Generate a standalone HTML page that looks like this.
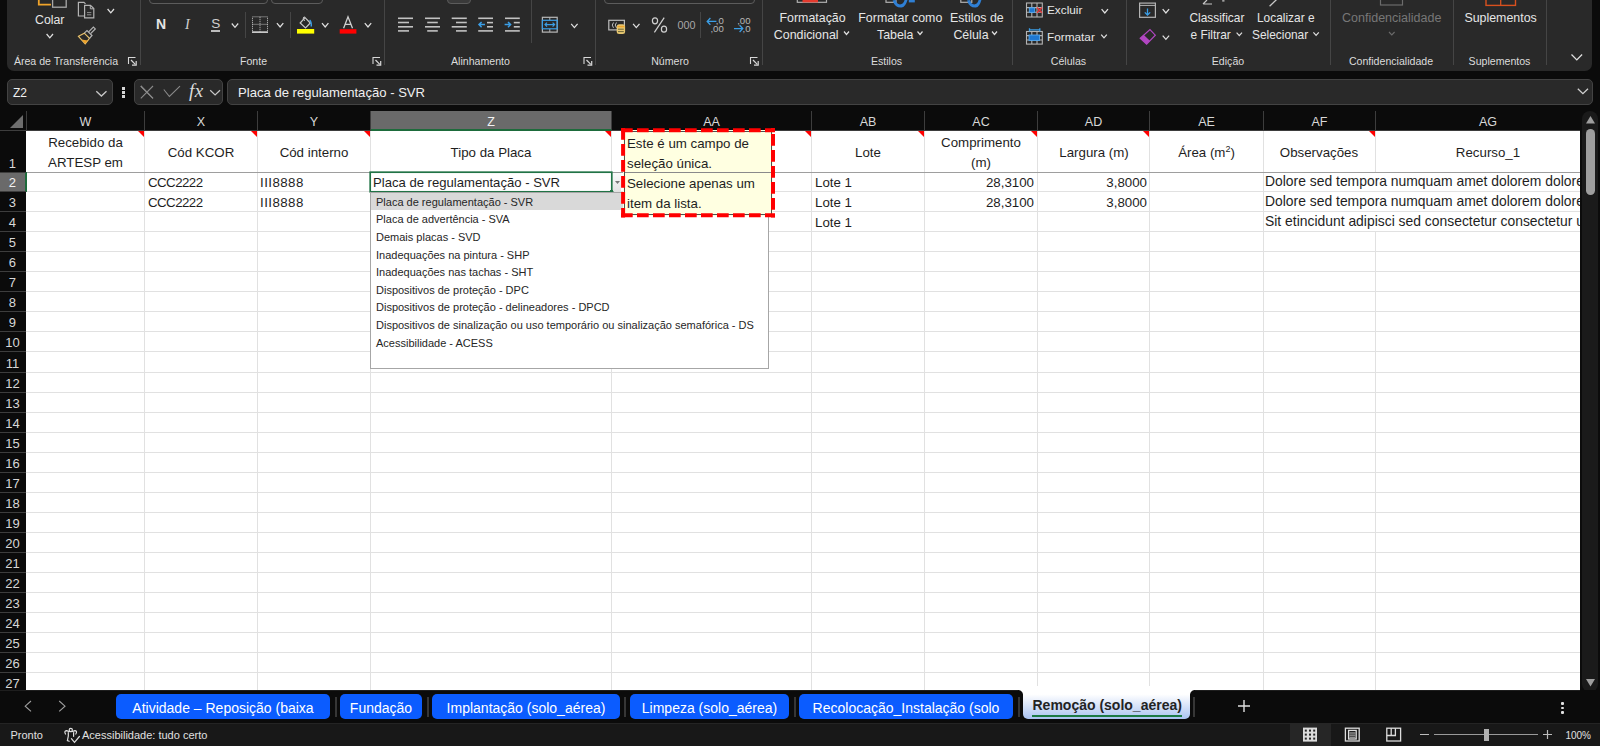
<!DOCTYPE html><html><head><meta charset="utf-8"><style>
html,body{margin:0;padding:0;width:1600px;height:746px;overflow:hidden;background:#0b0b0b;font-family:"Liberation Sans",sans-serif}
.t{position:absolute;white-space:nowrap}
.r{position:absolute}
svg{position:absolute;overflow:visible}
</style></head><body>
<div class="r" style="left:7px;top:-10px;width:1585px;height:81px;background:#292929;border-radius:7px"></div>
<div class="r" style="left:140px;top:0px;width:1px;height:65px;background:#454545"></div>
<div class="r" style="left:384px;top:0px;width:1px;height:65px;background:#454545"></div>
<div class="r" style="left:595px;top:0px;width:1px;height:65px;background:#454545"></div>
<div class="r" style="left:762px;top:0px;width:1px;height:65px;background:#454545"></div>
<div class="r" style="left:1012px;top:0px;width:1px;height:65px;background:#454545"></div>
<div class="r" style="left:1126px;top:0px;width:1px;height:65px;background:#454545"></div>
<div class="r" style="left:1330px;top:0px;width:1px;height:65px;background:#454545"></div>
<div class="r" style="left:1453px;top:0px;width:1px;height:65px;background:#454545"></div>
<div class="r" style="left:1546px;top:0px;width:1px;height:65px;background:#454545"></div>
<div class="r" style="left:245px;top:12px;width:1px;height:26px;background:#454545"></div>
<div class="r" style="left:290px;top:12px;width:1px;height:26px;background:#454545"></div>
<div class="r" style="left:531px;top:0px;width:1px;height:43px;background:#454545"></div>
<div class="r" style="left:700px;top:12px;width:1px;height:26px;background:#454545"></div>
<div class="t" style="left:-234px;width:600px;text-align:center;top:56.03px;font-size:10.6px;line-height:10.6px;color:#dcdcdc;font-weight:normal;">Área de Transferência</div>
<div class="t" style="left:-46.5px;width:600px;text-align:center;top:56.03px;font-size:10.6px;line-height:10.6px;color:#dcdcdc;font-weight:normal;">Fonte</div>
<div class="t" style="left:180.5px;width:600px;text-align:center;top:56.03px;font-size:10.6px;line-height:10.6px;color:#dcdcdc;font-weight:normal;">Alinhamento</div>
<div class="t" style="left:370px;width:600px;text-align:center;top:56.03px;font-size:10.6px;line-height:10.6px;color:#dcdcdc;font-weight:normal;">Número</div>
<div class="t" style="left:586.5px;width:600px;text-align:center;top:56.03px;font-size:10.6px;line-height:10.6px;color:#dcdcdc;font-weight:normal;">Estilos</div>
<div class="t" style="left:768.5px;width:600px;text-align:center;top:56.03px;font-size:10.6px;line-height:10.6px;color:#dcdcdc;font-weight:normal;">Células</div>
<div class="t" style="left:928px;width:600px;text-align:center;top:56.03px;font-size:10.6px;line-height:10.6px;color:#dcdcdc;font-weight:normal;">Edição</div>
<div class="t" style="left:1091px;width:600px;text-align:center;top:56.03px;font-size:10.6px;line-height:10.6px;color:#dcdcdc;font-weight:normal;">Confidencialidade</div>
<div class="t" style="left:1199.5px;width:600px;text-align:center;top:56.03px;font-size:10.6px;line-height:10.6px;color:#dcdcdc;font-weight:normal;">Suplementos</div>
<svg style="left:0;top:0" width="1" height="1"><path d="M38.8,0 V4.6 H51" fill="none" stroke="#f0a32a" stroke-width="1.8"/><rect x="52.6" y="-3" width="13.6" height="10.2" fill="none" stroke="#a8a8a8" stroke-width="1.3"/></svg>
<div class="t" style="left:35px;top:13.59px;font-size:12.3px;line-height:12.3px;color:#e6e6e6;font-weight:normal;">Colar</div>
<svg style="left:0;top:0" width="1" height="1"><polyline points="46.6,34 49.800000000000004,37.8 53.0,34" fill="none" stroke="#e0e0e0" stroke-width="1.25" stroke-linejoin="miter"/></svg>
<svg style="left:0;top:0" width="1" height="1"><path d="M84.5,16 H78.4 V2.3 H84 L85.5,3.8" fill="none" stroke="#b4b4b4" stroke-width="1.2"/><path d="M84.6,5.3 H90.5 L93.8,8.6 V17.8 H84.6 Z" fill="#292929" stroke="#b4b4b4" stroke-width="1.2"/><path d="M90.3,5.3 V8.8 H93.8" fill="none" stroke="#b4b4b4" stroke-width="1"/><path d="M87,12.6 H91.3 M87,14.8 H91.3" stroke="#9a9a9a" stroke-width="0.9"/></svg>
<svg style="left:0;top:0" width="1" height="1"><polyline points="107.6,9 110.8,12.8 114.0,9" fill="none" stroke="#e0e0e0" stroke-width="1.25" stroke-linejoin="miter"/></svg>
<svg style="left:0;top:0" width="1" height="1"><path d="M78.5,36.3 L84.3,33.2 L89.5,38.4 L85.2,43.8 Z" fill="none" stroke="#e8c06a" stroke-width="1.2"/><path d="M81.5,39.5 L87.8,40.5 L85.2,43.8 Z" fill="#f0a32a"/><path d="M84.3,33.2 L87,30.5 L92,35.5 L89.5,38.4" fill="none" stroke="#b4b4b4" stroke-width="1.2"/><path d="M88.6,31.8 L93.4,27 L95.3,28.9 L90.6,33.7" fill="none" stroke="#b4b4b4" stroke-width="1.2"/></svg>
<svg style="left:0;top:0" width="1" height="1"><path d="M128.5,64 V57.5 H135.5" fill="none" stroke="#d8d8d8" stroke-width="1.1"/><path d="M131,60 L135.3,64.3" stroke="#d8d8d8" stroke-width="1.2"/><path d="M136.2,61 V65.2 H132" fill="none" stroke="#d8d8d8" stroke-width="1.2"/></svg>
<div class="r" style="left:149px;top:-10px;width:119px;height:13.5px;border:1px solid #5c5c5c;border-radius:4px;box-sizing:border-box"></div>
<div class="r" style="left:270.5px;top:-10px;width:52.5px;height:13.5px;border:1px solid #5c5c5c;border-radius:4px;box-sizing:border-box"></div>
<div class="t" style="left:156px;top:17.15px;font-size:14px;line-height:14px;color:#e4e4e4;font-weight:bold;">N</div>
<div class="t" style="left:185px;top:17.2px;font-family:'Liberation Serif';font-style:italic;font-size:14.2px;line-height:14px;color:#d0d0d0">I</div>
<div class="t" style="left:211.2px;top:17.49px;font-size:13.6px;line-height:13.6px;color:#d0d0d0;font-weight:normal;">S</div>
<div class="r" style="left:211px;top:30px;width:9px;height:1.6px;background:#bcbcbc"></div>
<svg style="left:0;top:0" width="1" height="1"><polyline points="231.8,23.5 235.0,27.3 238.20000000000002,23.5" fill="none" stroke="#e0e0e0" stroke-width="1.25" stroke-linejoin="miter"/></svg>
<svg style="left:0;top:0" width="1" height="1"><g fill="none" stroke="#c4c4c4" stroke-width="1" stroke-dasharray="1 1"><rect x="252.5" y="16.8" width="15" height="15"/><path d="M260,16.8 V32 M252.5,24.3 H267.5"/></g><path d="M252,32.2 H268" stroke="#c8c8c8" stroke-width="1.6"/></svg>
<svg style="left:0;top:0" width="1" height="1"><polyline points="276.9,23.2 280.09999999999997,27.0 283.29999999999995,23.2" fill="none" stroke="#e0e0e0" stroke-width="1.25" stroke-linejoin="miter"/></svg>
<svg style="left:0;top:0" width="1" height="1"><path d="M300.2,23 L305,17.6 L310.3,23 L305.5,28 Z" fill="none" stroke="#c8c8c8" stroke-width="1.2"/><path d="M305,17.6 L304,16.8 L303.2,18.2 L304.6,21" fill="none" stroke="#c8c8c8" stroke-width="1"/><path d="M309.6,20 Q311.5,21.5 311.3,26.5" fill="none" stroke="#3b9ee6" stroke-width="1.5"/><rect x="297" y="29" width="17.2" height="4.6" fill="#ffff00"/></svg>
<svg style="left:0;top:0" width="1" height="1"><polyline points="322,23.2 325.2,27.0 328.4,23.2" fill="none" stroke="#e0e0e0" stroke-width="1.25" stroke-linejoin="miter"/></svg>
<svg style="left:0;top:0" width="1" height="1"><path d="M343.6,28.3 L348,16.8 L352.5,28.3 M345.2,24.3 H350.8" fill="none" stroke="#cfcfcf" stroke-width="1.3"/><rect x="339.7" y="29.2" width="16.7" height="4.4" fill="#ff0000"/></svg>
<svg style="left:0;top:0" width="1" height="1"><polyline points="364.8,23.2 368.0,27.0 371.2,23.2" fill="none" stroke="#e0e0e0" stroke-width="1.25" stroke-linejoin="miter"/></svg>
<svg style="left:0;top:0" width="1" height="1"><path d="M373.0,64 V57.5 H380.0" fill="none" stroke="#d8d8d8" stroke-width="1.1"/><path d="M375.5,60 L379.8,64.3" stroke="#d8d8d8" stroke-width="1.2"/><path d="M380.7,61 V65.2 H376.5" fill="none" stroke="#d8d8d8" stroke-width="1.2"/></svg>
<div class="r" style="left:446.7px;top:-10px;width:24.8px;height:13.8px;background:#3a3a3a;border:1px solid #5c5c5c;border-radius:4px;box-sizing:border-box"></div>
<svg style="left:0;top:0" width="1" height="1"><g stroke="#c2c2c2" stroke-width="1.6"><path d="M398,18.3 H413"/><path d="M398,22.5 H409"/><path d="M398,26.8 H413"/><path d="M398,30.9 H409"/></g></svg>
<svg style="left:0;top:0" width="1" height="1"><g stroke="#c2c2c2" stroke-width="1.6"><path d="M425,18.3 H440"/><path d="M427.2,22.5 H437.8"/><path d="M425,26.8 H440"/><path d="M427.2,30.9 H437.8"/></g></svg>
<svg style="left:0;top:0" width="1" height="1"><g stroke="#c2c2c2" stroke-width="1.6"><path d="M451.7,18.3 H466.8"/><path d="M456,22.5 H466.8"/><path d="M451.7,26.8 H466.8"/><path d="M456,30.9 H466.8"/></g></svg>
<svg style="left:0;top:0" width="1" height="1"><g stroke="#c2c2c2" stroke-width="1.6"><path d="M478.2,18.3 H493"/><path d="M487,22.6 H493"/><path d="M487,26.8 H493"/><path d="M478.2,30.9 H493"/></g></svg>
<svg style="left:0;top:0" width="1" height="1"><g stroke="#c2c2c2" stroke-width="1.6"><path d="M505,18.3 H519.8"/><path d="M513.8,22.6 H519.8"/><path d="M513.8,26.8 H519.8"/><path d="M505,30.9 H519.8"/></g></svg>
<svg style="left:0;top:0" width="1" height="1"><g fill="none" stroke="#3b9ee6" stroke-width="1.5"><path d="M479,24.6 H485 M481.6,22 L479,24.6 L481.6,27.2"/><path d="M504.6,24.6 H510.6 M508,22 L510.6,24.6 L508,27.2"/></g></svg>
<svg style="left:0;top:0" width="1" height="1"><rect x="542.4" y="17.3" width="14.8" height="14.8" fill="none" stroke="#b8b8b8" stroke-width="1.2"/><path d="M549.8,17.3 V20.3 M549.8,28.8 V32" stroke="#b8b8b8" stroke-width="1"/><rect x="542.4" y="20.3" width="14.8" height="8.5" fill="none" stroke="#3b9ee6" stroke-width="1.2"/><g fill="none" stroke="#3b9ee6" stroke-width="1.2"><path d="M545,24.6 H554.6 M547,22.6 L545,24.6 L547,26.6 M552.6,22.6 L554.6,24.6 L552.6,26.6"/></g></svg>
<svg style="left:0;top:0" width="1" height="1"><polyline points="571.2,23.8 574.4000000000001,27.6 577.6,23.8" fill="none" stroke="#e0e0e0" stroke-width="1.25" stroke-linejoin="miter"/></svg>
<svg style="left:0;top:0" width="1" height="1"><path d="M584.0,64 V57.5 H591.0" fill="none" stroke="#d8d8d8" stroke-width="1.1"/><path d="M586.5,60 L590.8,64.3" stroke="#d8d8d8" stroke-width="1.2"/><path d="M591.7,61 V65.2 H587.5" fill="none" stroke="#d8d8d8" stroke-width="1.2"/></svg>
<div class="r" style="left:604px;top:-10px;width:151px;height:13.9px;border:1px solid #5c5c5c;border-radius:4px;box-sizing:border-box"></div>
<svg style="left:0;top:0" width="1" height="1"><rect x="608.8" y="20.3" width="15.6" height="9.6" fill="none" stroke="#bdbdbd" stroke-width="1.2"/><path d="M613.5,22.5 Q611,25 613.5,27.8 M616.5,22.5 Q614,25 616.5,27.8" fill="none" stroke="#bdbdbd" stroke-width="1"/><rect x="616.7" y="24.2" width="8.4" height="9.7" rx="2.5" fill="#e6c670"/><path d="M617.5,26.6 H624.3" stroke="#f0a32a" stroke-width="1.4"/><path d="M618,29.2 H623.8 M618,31.6 H623.8" stroke="#4a4a2a" stroke-width="0.8"/></svg>
<svg style="left:0;top:0" width="1" height="1"><polyline points="633.1,23.8 636.3000000000001,27.6 639.5,23.8" fill="none" stroke="#e0e0e0" stroke-width="1.25" stroke-linejoin="miter"/></svg>
<svg style="left:0;top:0" width="1" height="1"><g fill="none" stroke="#d0d0d0" stroke-width="1.2"><ellipse cx="655" cy="20.8" rx="2.6" ry="3"/><ellipse cx="664" cy="29.2" rx="2.6" ry="3"/><path d="M664.2,17.6 L654.4,32.3"/></g></svg>
<div class="t" style="left:677.4px;top:19.76px;font-size:10.8px;line-height:10.8px;color:#a8a8a8;font-weight:normal;">000</div>
<svg style="left:0;top:0" width="1" height="1"><g fill="none" stroke="#3b9ee6" stroke-width="1.3"><path d="M707.2,21.4 H716.4 M710.4,18 L707.2,21.4 L710.4,24.8"/><path d="M734,28.6 H742.8 M739.6,25.2 L742.8,28.6 L739.6,32"/></g></svg>
<div class="t" style="left:715.8px;top:15.67px;font-size:9.6px;line-height:9.6px;color:#b8b8b8;font-weight:normal;">,0</div>
<div class="t" style="left:710.4px;top:24.47px;font-size:9.6px;line-height:9.6px;color:#b8b8b8;font-weight:normal;">,00</div>
<div class="t" style="left:737.2px;top:15.67px;font-size:9.6px;line-height:9.6px;color:#b8b8b8;font-weight:normal;">,00</div>
<div class="t" style="left:742.6px;top:24.47px;font-size:9.6px;line-height:9.6px;color:#b8b8b8;font-weight:normal;">,0</div>
<svg style="left:0;top:0" width="1" height="1"><path d="M750.5,64 V57.5 H757.5" fill="none" stroke="#d8d8d8" stroke-width="1.1"/><path d="M753,60 L757.3,64.3" stroke="#d8d8d8" stroke-width="1.2"/><path d="M758.2,61 V65.2 H754" fill="none" stroke="#d8d8d8" stroke-width="1.2"/></svg>
<svg style="left:0;top:0" width="1" height="1"><rect x="797.3" y="-6" width="29.2" height="8.3" fill="none" stroke="#b0b0b0" stroke-width="1.2"/><rect x="802.5" y="-5" width="15.5" height="7.4" fill="#e43a2e"/><rect x="886" y="-6" width="10" height="8.3" fill="none" stroke="#b0b0b0" stroke-width="1.2"/><path d="M892.6,0.5 Q895,8 901.5,7.6 Q905.5,7 907.5,0 L904.6,0 Q903.5,4.2 900,4.4 Q896.6,4.2 895.8,0 Z" fill="#2f7fd4"/><rect x="908.8" y="-5" width="6" height="7.4" fill="#2f7fd4"/><rect x="960.8" y="-6" width="11" height="8.3" fill="none" stroke="#b0b0b0" stroke-width="1.2"/><path d="M967,0.5 Q969.4,8 975.8,7.6 Q979.6,7 981.4,0 L978.6,0 Q977.6,4.2 974.2,4.4 Q970.8,4.2 970.2,0 Z" fill="#2f7fd4"/></svg>
<div class="t" style="left:779.5px;top:12.30px;font-size:12.4px;line-height:12.4px;color:#e6e6e6;font-weight:normal;">Formatação</div>
<div class="t" style="left:773.8px;top:28.50px;font-size:12.4px;line-height:12.4px;color:#e6e6e6;font-weight:normal;">Condicional</div>
<svg style="left:0;top:0" width="1" height="1"><polyline points="844,31.5 846.5,34.5 849,31.5" fill="none" stroke="#e0e0e0" stroke-width="1.2" stroke-linejoin="miter"/></svg>
<div class="t" style="left:858.3px;top:12.30px;font-size:12.4px;line-height:12.4px;color:#e6e6e6;font-weight:normal;">Formatar como</div>
<div class="t" style="left:877px;top:28.50px;font-size:12.4px;line-height:12.4px;color:#e6e6e6;font-weight:normal;">Tabela</div>
<svg style="left:0;top:0" width="1" height="1"><polyline points="917.5,31.5 920.0,34.5 922.5,31.5" fill="none" stroke="#e0e0e0" stroke-width="1.2" stroke-linejoin="miter"/></svg>
<div class="t" style="left:950px;top:12.30px;font-size:12.4px;line-height:12.4px;color:#e6e6e6;font-weight:normal;">Estilos de</div>
<div class="t" style="left:953.4px;top:28.50px;font-size:12.4px;line-height:12.4px;color:#e6e6e6;font-weight:normal;">Célula</div>
<svg style="left:0;top:0" width="1" height="1"><polyline points="992,31.5 994.5,34.5 997,31.5" fill="none" stroke="#e0e0e0" stroke-width="1.2" stroke-linejoin="miter"/></svg>
<svg style="left:0;top:0" width="1" height="1"><g fill="none" stroke="#b4b4b4" stroke-width="1.1"><rect x="1026.5" y="3" width="15.8" height="14"/><path d="M1026.5,7.6 H1042.3 M1026.5,12.3 H1042.3 M1031.8,3 V17 M1037,3 V17"/></g><rect x="1029.3" y="7.8" width="5.4" height="4.6" fill="#1f78d1" stroke="#55a8ee" stroke-width="0.9"/><path d="M1037,7.5 L1042,12.8 M1042,7.5 L1037,12.8" stroke="#e8353a" stroke-width="1.3"/></svg>
<div class="t" style="left:1047px;top:5.21px;font-size:11.8px;line-height:11.8px;color:#e6e6e6;font-weight:normal;">Excluir</div>
<svg style="left:0;top:0" width="1" height="1"><polyline points="1101.6,9.2 1104.8,13.0 1108.0,9.2" fill="none" stroke="#e0e0e0" stroke-width="1.25" stroke-linejoin="miter"/></svg>
<svg style="left:0;top:0" width="1" height="1"><g fill="none" stroke="#b4b4b4" stroke-width="1.1"><rect x="1026.5" y="31.5" width="15.8" height="12.6"/><path d="M1026.5,35.6 H1042.3 M1026.5,40 H1042.3 M1031.8,31.5 V44 M1037,31.5 V44"/></g><rect x="1029" y="35" width="10.6" height="5.4" fill="#1f78d1" stroke="#55a8ee" stroke-width="0.9"/><path d="M1029.5,29.8 H1039.8 M1029.5,28.2 V31.4 M1039.8,28.2 V31.4" stroke="#3b9ee6" stroke-width="1.3"/></svg>
<div class="t" style="left:1047px;top:31.61px;font-size:11.8px;line-height:11.8px;color:#e6e6e6;font-weight:normal;">Formatar</div>
<svg style="left:0;top:0" width="1" height="1"><polyline points="1101.2,34.6 1104.0,37.9 1106.8,34.6" fill="none" stroke="#e0e0e0" stroke-width="1.25" stroke-linejoin="miter"/></svg>
<svg style="left:0;top:0" width="1" height="1"><rect x="1139.6" y="3.1" width="15.8" height="14.2" fill="none" stroke="#b4b4b4" stroke-width="1.2"/><path d="M1139.6,5.4 H1155.4" stroke="#b4b4b4" stroke-width="1"/><path d="M1147.5,8.5 V15 M1144.8,12.4 L1147.5,15 L1150.2,12.4" fill="none" stroke="#3b9ee6" stroke-width="1.3"/><path d="M1150,29.6 L1155.3,35.2 L1146.6,44.2 L1140.2,38.2 Z" fill="none" stroke="#b146c2" stroke-width="1.2"/><path d="M1143.6,34.7 L1149.9,40.8 L1146.6,44.2 L1140.2,38.2 Z" fill="#b146c2"/><path d="M1203,4 H1212 M1203,4 L1207,0 M1222.2,0.8 H1224.5" fill="none" stroke="#c8c8c8" stroke-width="1.2"/><path d="M1269.6,6.3 L1276.6,-0.5" stroke="#c8c8c8" stroke-width="1.3"/></svg>
<svg style="left:0;top:0" width="1" height="1"><polyline points="1162.7,9.2 1165.9,13.0 1169.1000000000001,9.2" fill="none" stroke="#e0e0e0" stroke-width="1.25" stroke-linejoin="miter"/></svg>
<svg style="left:0;top:0" width="1" height="1"><polyline points="1162.7,35.6 1165.9,39.4 1169.1000000000001,35.6" fill="none" stroke="#e0e0e0" stroke-width="1.25" stroke-linejoin="miter"/></svg>
<div class="t" style="left:1189.5px;top:13.13px;font-size:11.9px;line-height:11.9px;color:#e6e6e6;font-weight:normal;">Classificar</div>
<div class="t" style="left:1190.5px;top:29.83px;font-size:11.9px;line-height:11.9px;color:#e6e6e6;font-weight:normal;">e Filtrar</div>
<svg style="left:0;top:0" width="1" height="1"><polyline points="1236.6,32.6 1239.3,35.6 1242.0,32.6" fill="none" stroke="#e0e0e0" stroke-width="1.2" stroke-linejoin="miter"/></svg>
<div class="t" style="left:1257px;top:13.13px;font-size:11.9px;line-height:11.9px;color:#e6e6e6;font-weight:normal;">Localizar e</div>
<div class="t" style="left:1252px;top:29.83px;font-size:11.9px;line-height:11.9px;color:#e6e6e6;font-weight:normal;">Selecionar</div>
<svg style="left:0;top:0" width="1" height="1"><polyline points="1313.4,32.4 1316.1000000000001,35.4 1318.8000000000002,32.4" fill="none" stroke="#e0e0e0" stroke-width="1.2" stroke-linejoin="miter"/></svg>
<svg style="left:0;top:0" width="1" height="1"><rect x="1380.5" y="-8" width="22" height="13" fill="none" stroke="#6c6c6c" stroke-width="1.2"/><rect x="1486" y="-8" width="29.5" height="13.4" fill="none" stroke="#d8501e" stroke-width="1.4"/><path d="M1500.7,-8 V5" stroke="#d8501e" stroke-width="1.3"/></svg>
<div class="t" style="left:1342px;top:12.42px;font-size:12.5px;line-height:12.5px;color:#777777;font-weight:normal;">Confidencialidade</div>
<svg style="left:0;top:0" width="1" height="1"><polyline points="1389,32 1391.8,35 1394.6,32" fill="none" stroke="#6a6a6a" stroke-width="1.1" stroke-linejoin="miter"/></svg>
<div class="t" style="left:1464.4px;top:12.30px;font-size:12.4px;line-height:12.4px;color:#e6e6e6;font-weight:normal;">Suplementos</div>
<svg style="left:0;top:0" width="1" height="1"><polyline points="1571.5,54.5 1576.8,59.9 1582.1,54.5" fill="none" stroke="#e0e0e0" stroke-width="1.3" stroke-linejoin="miter"/></svg>
<div class="r" style="left:7px;top:79px;width:104px;height:24px;background:#292929;border:1px solid #434343;border-radius:5px"></div>
<div class="r" style="left:134px;top:79px;width:87px;height:24px;background:#292929;border:1px solid #434343;border-radius:5px"></div>
<div class="t" style="left:13px;top:86.84px;font-size:12px;line-height:12px;color:#f0f0f0;font-weight:normal;">Z2</div>
<svg style="left:0;top:0" width="1" height="1"><polyline points="96.3,91.2 101.4,96 106.5,91.2" fill="none" stroke="#c8c8c8" stroke-width="1.3"/><polyline points="140.8,86 153,98.3 M140.8,98.3 153,86" fill="none" stroke="#8a8a8a" stroke-width="1.1"/><path d="M140.8,86 L153,98.3 M140.8,98.3 L153,86" stroke="#8a8a8a" stroke-width="1.1"/><polyline points="163.8,89.5 169.4,96.5 180,86.2" fill="none" stroke="#8a8a8a" stroke-width="1.1"/><polyline points="210.2,90.2 215.1,95 220,90.2" fill="none" stroke="#c8c8c8" stroke-width="1.2"/></svg>
<div class="r" style="left:122px;top:87px;width:3px;height:3px;background:#d6d6d6"></div>
<div class="r" style="left:122px;top:91px;width:3px;height:3px;background:#d6d6d6"></div>
<div class="r" style="left:122px;top:95px;width:3px;height:3px;background:#d6d6d6"></div>
<div class="t" style="left:189px;top:80.5px;font-family:Liberation Serif;font-style:italic;font-size:19px;line-height:19px;letter-spacing:0.5px;color:#dcdcdc">fx</div>
<div class="r" style="left:227px;top:79px;width:1364px;height:24px;background:#292929;border:1px solid #434343;border-radius:5px"></div>
<div class="t" style="left:238px;top:85.91px;font-size:13.1px;line-height:13.1px;color:#f0f0f0;font-weight:normal;">Placa de regulamentação - SVR</div>
<svg style="left:0;top:0" width="1" height="1"><polyline points="1577.8,88.8 1582.9,93.6 1588,88.8" fill="none" stroke="#d0d0d0" stroke-width="1.3"/></svg>
<div class="r" style="left:0px;top:111px;width:1580px;height:20px;background:#0b0b0b"></div>
<div class="r" style="left:26px;top:131px;width:1554px;height:559px;background:#ffffff"></div>
<div class="r" style="left:144px;top:131px;width:1px;height:559px;background:#e1e1e1"></div>
<div class="r" style="left:257px;top:131px;width:1px;height:559px;background:#e1e1e1"></div>
<div class="r" style="left:370px;top:131px;width:1px;height:559px;background:#e1e1e1"></div>
<div class="r" style="left:611px;top:131px;width:1px;height:559px;background:#e1e1e1"></div>
<div class="r" style="left:811px;top:131px;width:1px;height:559px;background:#e1e1e1"></div>
<div class="r" style="left:924px;top:131px;width:1px;height:559px;background:#e1e1e1"></div>
<div class="r" style="left:1037px;top:131px;width:1px;height:559px;background:#e1e1e1"></div>
<div class="r" style="left:1149px;top:131px;width:1px;height:559px;background:#e1e1e1"></div>
<div class="r" style="left:1263px;top:131px;width:1px;height:559px;background:#e1e1e1"></div>
<div class="r" style="left:1375px;top:131px;width:1px;height:559px;background:#e1e1e1"></div>
<div class="r" style="left:26px;top:172px;width:1554px;height:1px;background:#9e9e9e"></div>
<div class="r" style="left:26px;top:191px;width:1554px;height:1px;background:#e1e1e1"></div>
<div class="r" style="left:26px;top:211px;width:1554px;height:1px;background:#e1e1e1"></div>
<div class="r" style="left:26px;top:231px;width:1554px;height:1px;background:#e1e1e1"></div>
<div class="r" style="left:26px;top:251px;width:1554px;height:1px;background:#e1e1e1"></div>
<div class="r" style="left:26px;top:271px;width:1554px;height:1px;background:#e1e1e1"></div>
<div class="r" style="left:26px;top:291px;width:1554px;height:1px;background:#e1e1e1"></div>
<div class="r" style="left:26px;top:311px;width:1554px;height:1px;background:#e1e1e1"></div>
<div class="r" style="left:26px;top:331px;width:1554px;height:1px;background:#e1e1e1"></div>
<div class="r" style="left:26px;top:351px;width:1554px;height:1px;background:#e1e1e1"></div>
<div class="r" style="left:26px;top:372px;width:1554px;height:1px;background:#e1e1e1"></div>
<div class="r" style="left:26px;top:392px;width:1554px;height:1px;background:#e1e1e1"></div>
<div class="r" style="left:26px;top:412px;width:1554px;height:1px;background:#e1e1e1"></div>
<div class="r" style="left:26px;top:432px;width:1554px;height:1px;background:#e1e1e1"></div>
<div class="r" style="left:26px;top:452px;width:1554px;height:1px;background:#e1e1e1"></div>
<div class="r" style="left:26px;top:472px;width:1554px;height:1px;background:#e1e1e1"></div>
<div class="r" style="left:26px;top:492px;width:1554px;height:1px;background:#e1e1e1"></div>
<div class="r" style="left:26px;top:512px;width:1554px;height:1px;background:#e1e1e1"></div>
<div class="r" style="left:26px;top:532px;width:1554px;height:1px;background:#e1e1e1"></div>
<div class="r" style="left:26px;top:552px;width:1554px;height:1px;background:#e1e1e1"></div>
<div class="r" style="left:26px;top:572px;width:1554px;height:1px;background:#e1e1e1"></div>
<div class="r" style="left:26px;top:592px;width:1554px;height:1px;background:#e1e1e1"></div>
<div class="r" style="left:26px;top:612px;width:1554px;height:1px;background:#e1e1e1"></div>
<div class="r" style="left:26px;top:632px;width:1554px;height:1px;background:#e1e1e1"></div>
<div class="r" style="left:26px;top:652px;width:1554px;height:1px;background:#e1e1e1"></div>
<div class="r" style="left:26px;top:672px;width:1554px;height:1px;background:#e1e1e1"></div>
<div class="r" style="left:0px;top:131px;width:26px;height:559px;background:#0b0b0b"></div>
<div class="r" style="left:371px;top:111px;width:240px;height:19px;background:#6a6a6a"></div>
<div class="r" style="left:371px;top:129px;width:240px;height:2px;background:#1d6b3b"></div>
<div class="r" style="left:26px;top:111px;width:1px;height:19px;background:#3d3d3d"></div>
<div class="r" style="left:144px;top:111px;width:1px;height:19px;background:#3d3d3d"></div>
<div class="r" style="left:257px;top:111px;width:1px;height:19px;background:#3d3d3d"></div>
<div class="r" style="left:370px;top:111px;width:1px;height:19px;background:#3d3d3d"></div>
<div class="r" style="left:611px;top:111px;width:1px;height:19px;background:#3d3d3d"></div>
<div class="r" style="left:811px;top:111px;width:1px;height:19px;background:#3d3d3d"></div>
<div class="r" style="left:924px;top:111px;width:1px;height:19px;background:#3d3d3d"></div>
<div class="r" style="left:1037px;top:111px;width:1px;height:19px;background:#3d3d3d"></div>
<div class="r" style="left:1149px;top:111px;width:1px;height:19px;background:#3d3d3d"></div>
<div class="r" style="left:1263px;top:111px;width:1px;height:19px;background:#3d3d3d"></div>
<div class="r" style="left:1375px;top:111px;width:1px;height:19px;background:#3d3d3d"></div>
<div class="r" style="left:0px;top:130px;width:371px;height:1px;background:#3d3d3d"></div>
<div class="r" style="left:611px;top:130px;width:969px;height:1px;background:#3d3d3d"></div>
<svg style="left:0;top:111px" width="26" height="19"><polygon points="23,4 23,17 10,17" fill="#6e6e6e"/></svg>
<div class="t" style="left:-214.5px;width:600px;text-align:center;top:116.22px;font-size:12.5px;line-height:12.5px;color:#d8d8d8;font-weight:normal;">W</div>
<div class="t" style="left:-99.0px;width:600px;text-align:center;top:116.22px;font-size:12.5px;line-height:12.5px;color:#d8d8d8;font-weight:normal;">X</div>
<div class="t" style="left:14.0px;width:600px;text-align:center;top:116.22px;font-size:12.5px;line-height:12.5px;color:#d8d8d8;font-weight:normal;">Y</div>
<div class="t" style="left:191.0px;width:600px;text-align:center;top:116.22px;font-size:12.5px;line-height:12.5px;color:#f2f2f2;font-weight:normal;">Z</div>
<div class="t" style="left:411.5px;width:600px;text-align:center;top:116.22px;font-size:12.5px;line-height:12.5px;color:#d8d8d8;font-weight:normal;">AA</div>
<div class="t" style="left:568.0px;width:600px;text-align:center;top:116.22px;font-size:12.5px;line-height:12.5px;color:#d8d8d8;font-weight:normal;">AB</div>
<div class="t" style="left:681.0px;width:600px;text-align:center;top:116.22px;font-size:12.5px;line-height:12.5px;color:#d8d8d8;font-weight:normal;">AC</div>
<div class="t" style="left:793.5px;width:600px;text-align:center;top:116.22px;font-size:12.5px;line-height:12.5px;color:#d8d8d8;font-weight:normal;">AD</div>
<div class="t" style="left:906.5px;width:600px;text-align:center;top:116.22px;font-size:12.5px;line-height:12.5px;color:#d8d8d8;font-weight:normal;">AE</div>
<div class="t" style="left:1019.5px;width:600px;text-align:center;top:116.22px;font-size:12.5px;line-height:12.5px;color:#d8d8d8;font-weight:normal;">AF</div>
<div class="t" style="left:1188.0px;width:600px;text-align:center;top:116.22px;font-size:12.5px;line-height:12.5px;color:#d8d8d8;font-weight:normal;">AG</div>
<div class="r" style="left:0px;top:173px;width:26px;height:18px;background:#6a6a6a"></div>
<div class="r" style="left:25px;top:172px;width:2px;height:20px;background:#1d6b3b"></div>
<div class="r" style="left:0px;top:172px;width:26px;height:1px;background:#3d3d3d"></div>
<div class="r" style="left:0px;top:191px;width:26px;height:1px;background:#3d3d3d"></div>
<div class="r" style="left:0px;top:211px;width:26px;height:1px;background:#3d3d3d"></div>
<div class="r" style="left:0px;top:231px;width:26px;height:1px;background:#3d3d3d"></div>
<div class="r" style="left:0px;top:251px;width:26px;height:1px;background:#3d3d3d"></div>
<div class="r" style="left:0px;top:271px;width:26px;height:1px;background:#3d3d3d"></div>
<div class="r" style="left:0px;top:291px;width:26px;height:1px;background:#3d3d3d"></div>
<div class="r" style="left:0px;top:311px;width:26px;height:1px;background:#3d3d3d"></div>
<div class="r" style="left:0px;top:331px;width:26px;height:1px;background:#3d3d3d"></div>
<div class="r" style="left:0px;top:351px;width:26px;height:1px;background:#3d3d3d"></div>
<div class="r" style="left:0px;top:372px;width:26px;height:1px;background:#3d3d3d"></div>
<div class="r" style="left:0px;top:392px;width:26px;height:1px;background:#3d3d3d"></div>
<div class="r" style="left:0px;top:412px;width:26px;height:1px;background:#3d3d3d"></div>
<div class="r" style="left:0px;top:432px;width:26px;height:1px;background:#3d3d3d"></div>
<div class="r" style="left:0px;top:452px;width:26px;height:1px;background:#3d3d3d"></div>
<div class="r" style="left:0px;top:472px;width:26px;height:1px;background:#3d3d3d"></div>
<div class="r" style="left:0px;top:492px;width:26px;height:1px;background:#3d3d3d"></div>
<div class="r" style="left:0px;top:512px;width:26px;height:1px;background:#3d3d3d"></div>
<div class="r" style="left:0px;top:532px;width:26px;height:1px;background:#3d3d3d"></div>
<div class="r" style="left:0px;top:552px;width:26px;height:1px;background:#3d3d3d"></div>
<div class="r" style="left:0px;top:572px;width:26px;height:1px;background:#3d3d3d"></div>
<div class="r" style="left:0px;top:592px;width:26px;height:1px;background:#3d3d3d"></div>
<div class="r" style="left:0px;top:612px;width:26px;height:1px;background:#3d3d3d"></div>
<div class="r" style="left:0px;top:632px;width:26px;height:1px;background:#3d3d3d"></div>
<div class="r" style="left:0px;top:652px;width:26px;height:1px;background:#3d3d3d"></div>
<div class="r" style="left:0px;top:672px;width:26px;height:1px;background:#3d3d3d"></div>
<div class="t" style="left:-287.7px;width:600px;text-align:center;top:156.60px;font-size:13px;line-height:13px;color:#d8d8d8;font-weight:normal;">1</div>
<div class="t" style="left:-287.6px;width:600px;text-align:center;top:176.40px;font-size:13px;line-height:13px;color:#f2f2f2;font-weight:normal;">2</div>
<div class="t" style="left:-287.6px;width:600px;text-align:center;top:196.40px;font-size:13px;line-height:13px;color:#d8d8d8;font-weight:normal;">3</div>
<div class="t" style="left:-287.6px;width:600px;text-align:center;top:216.40px;font-size:13px;line-height:13px;color:#d8d8d8;font-weight:normal;">4</div>
<div class="t" style="left:-287.6px;width:600px;text-align:center;top:236.40px;font-size:13px;line-height:13px;color:#d8d8d8;font-weight:normal;">5</div>
<div class="t" style="left:-287.6px;width:600px;text-align:center;top:256.40px;font-size:13px;line-height:13px;color:#d8d8d8;font-weight:normal;">6</div>
<div class="t" style="left:-287.6px;width:600px;text-align:center;top:276.40px;font-size:13px;line-height:13px;color:#d8d8d8;font-weight:normal;">7</div>
<div class="t" style="left:-287.6px;width:600px;text-align:center;top:296.40px;font-size:13px;line-height:13px;color:#d8d8d8;font-weight:normal;">8</div>
<div class="t" style="left:-287.6px;width:600px;text-align:center;top:316.40px;font-size:13px;line-height:13px;color:#d8d8d8;font-weight:normal;">9</div>
<div class="t" style="left:-287.6px;width:600px;text-align:center;top:336.40px;font-size:13px;line-height:13px;color:#d8d8d8;font-weight:normal;">10</div>
<div class="t" style="left:-287.6px;width:600px;text-align:center;top:357.40px;font-size:13px;line-height:13px;color:#d8d8d8;font-weight:normal;">11</div>
<div class="t" style="left:-287.6px;width:600px;text-align:center;top:377.40px;font-size:13px;line-height:13px;color:#d8d8d8;font-weight:normal;">12</div>
<div class="t" style="left:-287.6px;width:600px;text-align:center;top:397.40px;font-size:13px;line-height:13px;color:#d8d8d8;font-weight:normal;">13</div>
<div class="t" style="left:-287.6px;width:600px;text-align:center;top:417.40px;font-size:13px;line-height:13px;color:#d8d8d8;font-weight:normal;">14</div>
<div class="t" style="left:-287.6px;width:600px;text-align:center;top:437.40px;font-size:13px;line-height:13px;color:#d8d8d8;font-weight:normal;">15</div>
<div class="t" style="left:-287.6px;width:600px;text-align:center;top:457.40px;font-size:13px;line-height:13px;color:#d8d8d8;font-weight:normal;">16</div>
<div class="t" style="left:-287.6px;width:600px;text-align:center;top:477.40px;font-size:13px;line-height:13px;color:#d8d8d8;font-weight:normal;">17</div>
<div class="t" style="left:-287.6px;width:600px;text-align:center;top:497.40px;font-size:13px;line-height:13px;color:#d8d8d8;font-weight:normal;">18</div>
<div class="t" style="left:-287.6px;width:600px;text-align:center;top:517.40px;font-size:13px;line-height:13px;color:#d8d8d8;font-weight:normal;">19</div>
<div class="t" style="left:-287.6px;width:600px;text-align:center;top:537.40px;font-size:13px;line-height:13px;color:#d8d8d8;font-weight:normal;">20</div>
<div class="t" style="left:-287.6px;width:600px;text-align:center;top:557.40px;font-size:13px;line-height:13px;color:#d8d8d8;font-weight:normal;">21</div>
<div class="t" style="left:-287.6px;width:600px;text-align:center;top:577.40px;font-size:13px;line-height:13px;color:#d8d8d8;font-weight:normal;">22</div>
<div class="t" style="left:-287.6px;width:600px;text-align:center;top:597.40px;font-size:13px;line-height:13px;color:#d8d8d8;font-weight:normal;">23</div>
<div class="t" style="left:-287.6px;width:600px;text-align:center;top:617.40px;font-size:13px;line-height:13px;color:#d8d8d8;font-weight:normal;">24</div>
<div class="t" style="left:-287.6px;width:600px;text-align:center;top:637.40px;font-size:13px;line-height:13px;color:#d8d8d8;font-weight:normal;">25</div>
<div class="t" style="left:-287.6px;width:600px;text-align:center;top:657.40px;font-size:13px;line-height:13px;color:#d8d8d8;font-weight:normal;">26</div>
<div class="t" style="left:-287.6px;width:600px;text-align:center;top:677.40px;font-size:13px;line-height:13px;color:#d8d8d8;font-weight:normal;">27</div>
<div class="t" style="left:-214.5px;width:600px;text-align:center;top:136.24px;font-size:13.3px;line-height:13.3px;color:#1e1e1e;font-weight:normal;">Recebido da</div>
<div class="t" style="left:-214.5px;width:600px;text-align:center;top:156.24px;font-size:13.3px;line-height:13.3px;color:#1e1e1e;font-weight:normal;">ARTESP em</div>
<div class="t" style="left:-99px;width:600px;text-align:center;top:145.74px;font-size:13.3px;line-height:13.3px;color:#1e1e1e;font-weight:normal;">Cód KCOR</div>
<div class="t" style="left:14px;width:600px;text-align:center;top:145.74px;font-size:13.3px;line-height:13.3px;color:#1e1e1e;font-weight:normal;">Cód interno</div>
<div class="t" style="left:191px;width:600px;text-align:center;top:145.74px;font-size:13.3px;line-height:13.3px;color:#1e1e1e;font-weight:normal;">Tipo da Placa</div>
<div class="t" style="left:568px;width:600px;text-align:center;top:145.74px;font-size:13.3px;line-height:13.3px;color:#1e1e1e;font-weight:normal;">Lote</div>
<div class="t" style="left:681px;width:600px;text-align:center;top:136.24px;font-size:13.3px;line-height:13.3px;color:#1e1e1e;font-weight:normal;">Comprimento</div>
<div class="t" style="left:681px;width:600px;text-align:center;top:156.24px;font-size:13.3px;line-height:13.3px;color:#1e1e1e;font-weight:normal;">(m)</div>
<div class="t" style="left:794px;width:600px;text-align:center;top:145.74px;font-size:13.3px;line-height:13.3px;color:#1e1e1e;font-weight:normal;">Largura (m)</div>
<div class="t" style="left:906.5px;width:600px;text-align:center;top:145.74px;font-size:13.3px;line-height:13.3px;color:#1e1e1e;font-weight:normal;">Área (m<span style="font-size:9px;position:relative;top:-5px">2</span>)</div>
<div class="t" style="left:1019px;width:600px;text-align:center;top:145.74px;font-size:13.3px;line-height:13.3px;color:#1e1e1e;font-weight:normal;">Observações</div>
<div class="t" style="left:1188px;width:600px;text-align:center;top:145.74px;font-size:13.3px;line-height:13.3px;color:#1e1e1e;font-weight:normal;">Recurso_1</div>
<svg style="left:138px;top:131px" width="6" height="6"><polygon points="0,0 6,0 6,6" fill="#ff0000"/></svg>
<svg style="left:251px;top:131px" width="6" height="6"><polygon points="0,0 6,0 6,6" fill="#ff0000"/></svg>
<svg style="left:364px;top:131px" width="6" height="6"><polygon points="0,0 6,0 6,6" fill="#ff0000"/></svg>
<svg style="left:605px;top:131px" width="6" height="6"><polygon points="0,0 6,0 6,6" fill="#ff0000"/></svg>
<svg style="left:805px;top:131px" width="6" height="6"><polygon points="0,0 6,0 6,6" fill="#ff0000"/></svg>
<svg style="left:918px;top:131px" width="6" height="6"><polygon points="0,0 6,0 6,6" fill="#ff0000"/></svg>
<svg style="left:1031px;top:131px" width="6" height="6"><polygon points="0,0 6,0 6,6" fill="#ff0000"/></svg>
<svg style="left:1143px;top:131px" width="6" height="6"><polygon points="0,0 6,0 6,6" fill="#ff0000"/></svg>
<svg style="left:1369px;top:131px" width="6" height="6"><polygon points="0,0 6,0 6,6" fill="#ff0000"/></svg>
<div class="t" style="left:148px;top:175.74px;font-size:13.3px;line-height:13.3px;color:#1e1e1e;font-weight:normal;letter-spacing:-0.55px">CCC2222</div>
<div class="t" style="left:260px;top:175.74px;font-size:13.3px;line-height:13.3px;color:#1e1e1e;font-weight:normal;letter-spacing:0.45px">III8888</div>
<div class="t" style="left:815px;top:175.74px;font-size:13.3px;line-height:13.3px;color:#1e1e1e;font-weight:normal;">Lote 1</div>
<div class="t" style="left:434px;width:600px;text-align:right;top:175.74px;font-size:13.3px;line-height:13.3px;color:#1e1e1e;font-weight:normal;">28,3100</div>
<div class="t" style="left:547px;width:600px;text-align:right;top:175.74px;font-size:13.3px;line-height:13.3px;color:#1e1e1e;font-weight:normal;">3,8000</div>
<div class="t" style="left:148px;top:195.74px;font-size:13.3px;line-height:13.3px;color:#1e1e1e;font-weight:normal;letter-spacing:-0.55px">CCC2222</div>
<div class="t" style="left:260px;top:195.74px;font-size:13.3px;line-height:13.3px;color:#1e1e1e;font-weight:normal;letter-spacing:0.45px">III8888</div>
<div class="t" style="left:815px;top:195.74px;font-size:13.3px;line-height:13.3px;color:#1e1e1e;font-weight:normal;">Lote 1</div>
<div class="t" style="left:434px;width:600px;text-align:right;top:195.74px;font-size:13.3px;line-height:13.3px;color:#1e1e1e;font-weight:normal;">28,3100</div>
<div class="t" style="left:547px;width:600px;text-align:right;top:195.74px;font-size:13.3px;line-height:13.3px;color:#1e1e1e;font-weight:normal;">3,8000</div>
<div class="t" style="left:815px;top:215.74px;font-size:13.3px;line-height:13.3px;color:#1e1e1e;font-weight:normal;">Lote 1</div>
<div class="r" style="left:1375px;top:173px;width:1px;height:18px;background:#fff"></div>
<div class="r" style="left:1375px;top:192px;width:1px;height:19px;background:#fff"></div>
<div class="r" style="left:1375px;top:212px;width:1px;height:19px;background:#fff"></div>
<div class="r" style="left:1263px;top:172px;width:317px;height:60px;overflow:hidden">
<div class="t" style="left:2px;top:3.23px;font-size:13.9px;line-height:13.9px;color:#1e1e1e">Dolore sed tempora numquam amet dolorem dolore</div>
<div class="t" style="left:2px;top:23.23px;font-size:13.9px;line-height:13.9px;color:#1e1e1e">Dolore sed tempora numquam amet dolorem dolore</div>
<div class="t" style="left:2px;top:43.23px;font-size:13.9px;line-height:13.9px;color:#1e1e1e">Sit etincidunt adipisci sed consectetur consectetur ut</div>
</div>
<div class="r" style="left:370px;top:173px;width:241px;height:18px;background:#fff"></div>
<div class="t" style="left:373px;top:175.91px;font-size:13.1px;line-height:13.1px;color:#1e1e1e;font-weight:normal;">Placa de regulamentação - SVR</div>
<svg style="left:0;top:0" width="1" height="1"><rect x="370.2" y="172.2" width="241.6" height="19.6" fill="none" stroke="#217346" stroke-width="1.7"/><rect x="610" y="190" width="3.5" height="3.5" fill="#217346"/></svg>
<div class="r" style="left:613px;top:173px;width:8px;height:18px;background:linear-gradient(#fbfbfb,#e4e4e4)"></div>
<svg style="left:613px;top:173px" width="9" height="18"><polygon points="2,8 7,8 4.5,11" fill="#777"/></svg>
<div class="r" style="left:370px;top:192px;width:399px;height:177px;background:#fff;border:1px solid #a6a6a6;box-sizing:border-box"></div>
<div class="r" style="left:371px;top:193px;width:397px;height:17px;background:#d9d9d9"></div>
<div class="t" style="left:376px;top:196.59px;font-size:11px;line-height:11px;color:#262626;font-weight:normal;">Placa de regulamentação - SVR</div>
<div class="t" style="left:376px;top:214.24px;font-size:11px;line-height:11px;color:#262626;font-weight:normal;">Placa de advertência - SVA</div>
<div class="t" style="left:376px;top:231.89px;font-size:11px;line-height:11px;color:#262626;font-weight:normal;">Demais placas - SVD</div>
<div class="t" style="left:376px;top:249.54px;font-size:11px;line-height:11px;color:#262626;font-weight:normal;">Inadequações na pintura - SHP</div>
<div class="t" style="left:376px;top:267.19px;font-size:11px;line-height:11px;color:#262626;font-weight:normal;">Inadequações nas tachas - SHT</div>
<div class="t" style="left:376px;top:284.84px;font-size:11px;line-height:11px;color:#262626;font-weight:normal;">Dispositivos de proteção - DPC</div>
<div class="t" style="left:376px;top:302.49px;font-size:11px;line-height:11px;color:#262626;font-weight:normal;">Dispositivos de proteção - delineadores - DPCD</div>
<div class="t" style="left:376px;top:320.14px;font-size:11px;line-height:11px;color:#262626;font-weight:normal;">Dispositivos de sinalização ou uso temporário ou sinalização semafórica - DS</div>
<div class="t" style="left:376px;top:337.79px;font-size:11px;line-height:11px;color:#262626;font-weight:normal;">Acessibilidade - ACESS</div>
<svg style="left:621px;top:128px" width="154" height="90"><rect x="2" y="2" width="150" height="86" fill="#ffffe1"/><rect x="3.5" y="3.5" width="147" height="83" fill="none" stroke="#505050" stroke-width="1"/><g stroke="#ff0000" stroke-width="4" stroke-dasharray="11.7 4.3" fill="none"><path d="M0,2.2 H154"/><path d="M152,0 V89.5" stroke-dashoffset="10"/><path d="M0,87.3 H154"/><path d="M2.1,0 V89.5"/></g></svg>
<div class="r" style="left:625px;top:172px;width:146px;height:1px;background:#8a8a8a"></div>
<div class="t" style="left:627px;top:136.74px;font-size:13.3px;line-height:13.3px;color:#1e1e1e;font-weight:normal;">Este é um campo de</div>
<div class="t" style="left:627px;top:156.74px;font-size:13.3px;line-height:13.3px;color:#1e1e1e;font-weight:normal;">seleção única.</div>
<div class="t" style="left:627px;top:176.74px;font-size:13.3px;line-height:13.3px;color:#1e1e1e;font-weight:normal;">Selecione apenas um</div>
<div class="t" style="left:627px;top:196.74px;font-size:13.3px;line-height:13.3px;color:#1e1e1e;font-weight:normal;">item da lista.</div>
<div class="r" style="left:1582px;top:111px;width:16px;height:581px;background:#1a1a1a;border-radius:8px"></div>
<svg style="left:1582px;top:111px" width="16" height="20"><polygon points="4,12.5 13,12.5 8.5,5" fill="#9e9e9e"/></svg>
<div class="r" style="left:1586px;top:129px;width:9px;height:66px;background:#9e9e9e;border-radius:4.5px"></div>
<svg style="left:1582px;top:675px" width="16" height="16"><polygon points="4,4 13,4 8.5,11.5" fill="#9e9e9e"/></svg>
<div class="r" style="left:0px;top:690px;width:1600px;height:33px;background:#0b0b0b"></div>
<svg style="left:0px;top:698px" width="60" height="18"><polyline points="31,3 25.2,8.2 31,13.4" fill="none" stroke="#a0a0a0" stroke-width="1.1"/><polyline points="59.2,3 65,8.2 59.2,13.4" fill="none" stroke="#a0a0a0" stroke-width="1.1"/></svg>
<div class="r" style="left:116px;top:694px;width:214px;height:25px;background:#0b5cff;border-radius:5px"></div>
<div class="t" style="left:-77.0px;width:600px;text-align:center;top:700.65px;font-size:14px;line-height:14px;color:#ffffff;font-weight:normal;">Atividade – Reposição (baixa</div>
<div class="r" style="left:340px;top:694px;width:82px;height:25px;background:#0b5cff;border-radius:5px"></div>
<div class="t" style="left:81.0px;width:600px;text-align:center;top:700.65px;font-size:14px;line-height:14px;color:#ffffff;font-weight:normal;">Fundação</div>
<div class="r" style="left:432px;top:694px;width:188px;height:25px;background:#0b5cff;border-radius:5px"></div>
<div class="t" style="left:226.0px;width:600px;text-align:center;top:700.65px;font-size:14px;line-height:14px;color:#ffffff;font-weight:normal;">Implantação (solo_aérea)</div>
<div class="r" style="left:630px;top:694px;width:159px;height:25px;background:#0b5cff;border-radius:5px"></div>
<div class="t" style="left:409.5px;width:600px;text-align:center;top:700.65px;font-size:14px;line-height:14px;color:#ffffff;font-weight:normal;">Limpeza (solo_aérea)</div>
<div class="r" style="left:799px;top:694px;width:214px;height:25px;background:#0b5cff;border-radius:5px"></div>
<div class="t" style="left:606.0px;width:600px;text-align:center;top:700.65px;font-size:14px;line-height:14px;color:#ffffff;font-weight:normal;">Recolocação_Instalação (solo</div>
<div class="r" style="left:0px;top:690px;width:1580px;height:1px;background:#1e1e1e"></div>
<div class="r" style="left:335px;top:697px;width:2px;height:20px;background:#363636"></div>
<div class="r" style="left:427px;top:697px;width:2px;height:20px;background:#363636"></div>
<div class="r" style="left:624px;top:697px;width:2px;height:20px;background:#363636"></div>
<div class="r" style="left:794px;top:697px;width:2px;height:20px;background:#363636"></div>
<div class="r" style="left:1018px;top:697px;width:2px;height:20px;background:#363636"></div>
<div class="r" style="left:1193px;top:697px;width:2px;height:20px;background:#363636"></div>
<div class="r" style="left:1023px;top:686px;width:167px;height:33px;background:linear-gradient(#ffffff 0%,#ffffff 25%,#a9c3f2 100%);border-radius:0 0 5px 5px"></div>
<div class="r" style="left:1018px;top:690px;width:5px;height:5px;background:radial-gradient(circle at 0% 100%, #0b0b0b 4.5px, #ffffff 5.5px)"></div>
<div class="r" style="left:1190px;top:690px;width:5px;height:5px;background:radial-gradient(circle at 100% 100%, #0b0b0b 4.5px, #ffffff 5.5px)"></div>
<div class="t" style="left:1032.5px;top:697.75px;font-size:14px;line-height:14px;color:#232323;font-weight:bold;">Remoção (solo_aérea)</div>
<div class="r" style="left:1032px;top:715px;width:150px;height:2px;background:#1b7a45"></div>
<svg style="left:1237px;top:699px" width="14" height="14"><path d="M7,1 V13 M1,7 H13" stroke="#e0e0e0" stroke-width="1.4"/></svg>
<div class="r" style="left:1561px;top:702px;width:2.5px;height:2.5px;background:#e0e0e0;border-radius:1px"></div>
<div class="r" style="left:1561px;top:706.5px;width:2.5px;height:2.5px;background:#e0e0e0;border-radius:1px"></div>
<div class="r" style="left:1561px;top:711px;width:2.5px;height:2.5px;background:#e0e0e0;border-radius:1px"></div>
<div class="r" style="left:0px;top:723px;width:1600px;height:23px;background:#181818;border-top:1px solid #242424;box-sizing:border-box"></div>
<div class="t" style="left:10.5px;top:730.19px;font-size:11px;line-height:11px;color:#e0e0e0;font-weight:normal;">Pronto</div>
<div class="t" style="left:82px;top:730.19px;font-size:11px;line-height:11px;color:#e0e0e0;font-weight:normal;">Acessibilidade: tudo certo</div>
<svg style="left:0;top:0" width="1" height="1"><g fill="none" stroke="#dedede" stroke-width="1.2" stroke-linecap="round"><circle cx="70.8" cy="729.9" r="1.6"/><path d="M65.5,734 Q63.8,731.2 66.5,730.6 Q70.8,732.6 75,730.6 Q77.6,731.2 75.8,734"/><path d="M68.3,732.5 Q68.8,736 67.4,740.6 L69.2,741.2"/><path d="M73.6,732.5 V736.3"/><path d="M71.4,738.6 L74.5,742.3 L79.4,736.5"/></g></svg>
<div class="r" style="left:1290px;top:723px;width:41px;height:23px;background:#262626"></div>
<svg style="left:0;top:0" width="1" height="1"><rect x="1303" y="727.6" width="14" height="14" fill="#dcdcdc"/><g fill="#262626"><rect x="1304.8" y="729.6" width="2" height="2"/><rect x="1304.8" y="733.6" width="2" height="2"/><rect x="1304.8" y="737.6" width="2" height="2"/><rect x="1309" y="729.6" width="2" height="2"/><rect x="1309" y="733.6" width="2" height="2"/><rect x="1309" y="737.6" width="2" height="2"/><rect x="1313.2" y="729.6" width="2" height="2"/><rect x="1313.2" y="733.6" width="2" height="2"/><rect x="1313.2" y="737.6" width="2" height="2"/></g><g fill="none" stroke="#dcdcdc" stroke-width="1.3"><rect x="1345.4" y="728.2" width="13.8" height="12.8"/><rect x="1348.6" y="730.4" width="7.6" height="8.6"/><path d="M1349.5,733 H1355.3 M1349.5,735.1 H1355.3 M1349.5,737.2 H1355.3" stroke-width="0.9"/><rect x="1386.8" y="728.2" width="13.8" height="12.8"/><path d="M1391.2,728.2 V735.5 M1395.4,728.2 V735.5 H1386.8"/></g></svg>
<div class="t" style="left:991px;width:600px;text-align:right;top:731.03px;font-size:10px;line-height:10px;color:#e0e0e0;font-weight:normal;">100%</div>
<div class="r" style="left:1434px;top:734px;width:104px;height:1px;background:#9a9a9a"></div>
<div class="r" style="left:1484px;top:729px;width:5px;height:12px;background:#b0b0b0"></div>
<div class="r" style="left:1420px;top:734px;width:9px;height:1.3px;background:#bdbdbd"></div>
<svg style="left:1542px;top:729px" width="11" height="11"><path d="M5.5,1 V10 M1,5.5 H10" stroke="#bdbdbd" stroke-width="1.2"/></svg>
</body></html>
